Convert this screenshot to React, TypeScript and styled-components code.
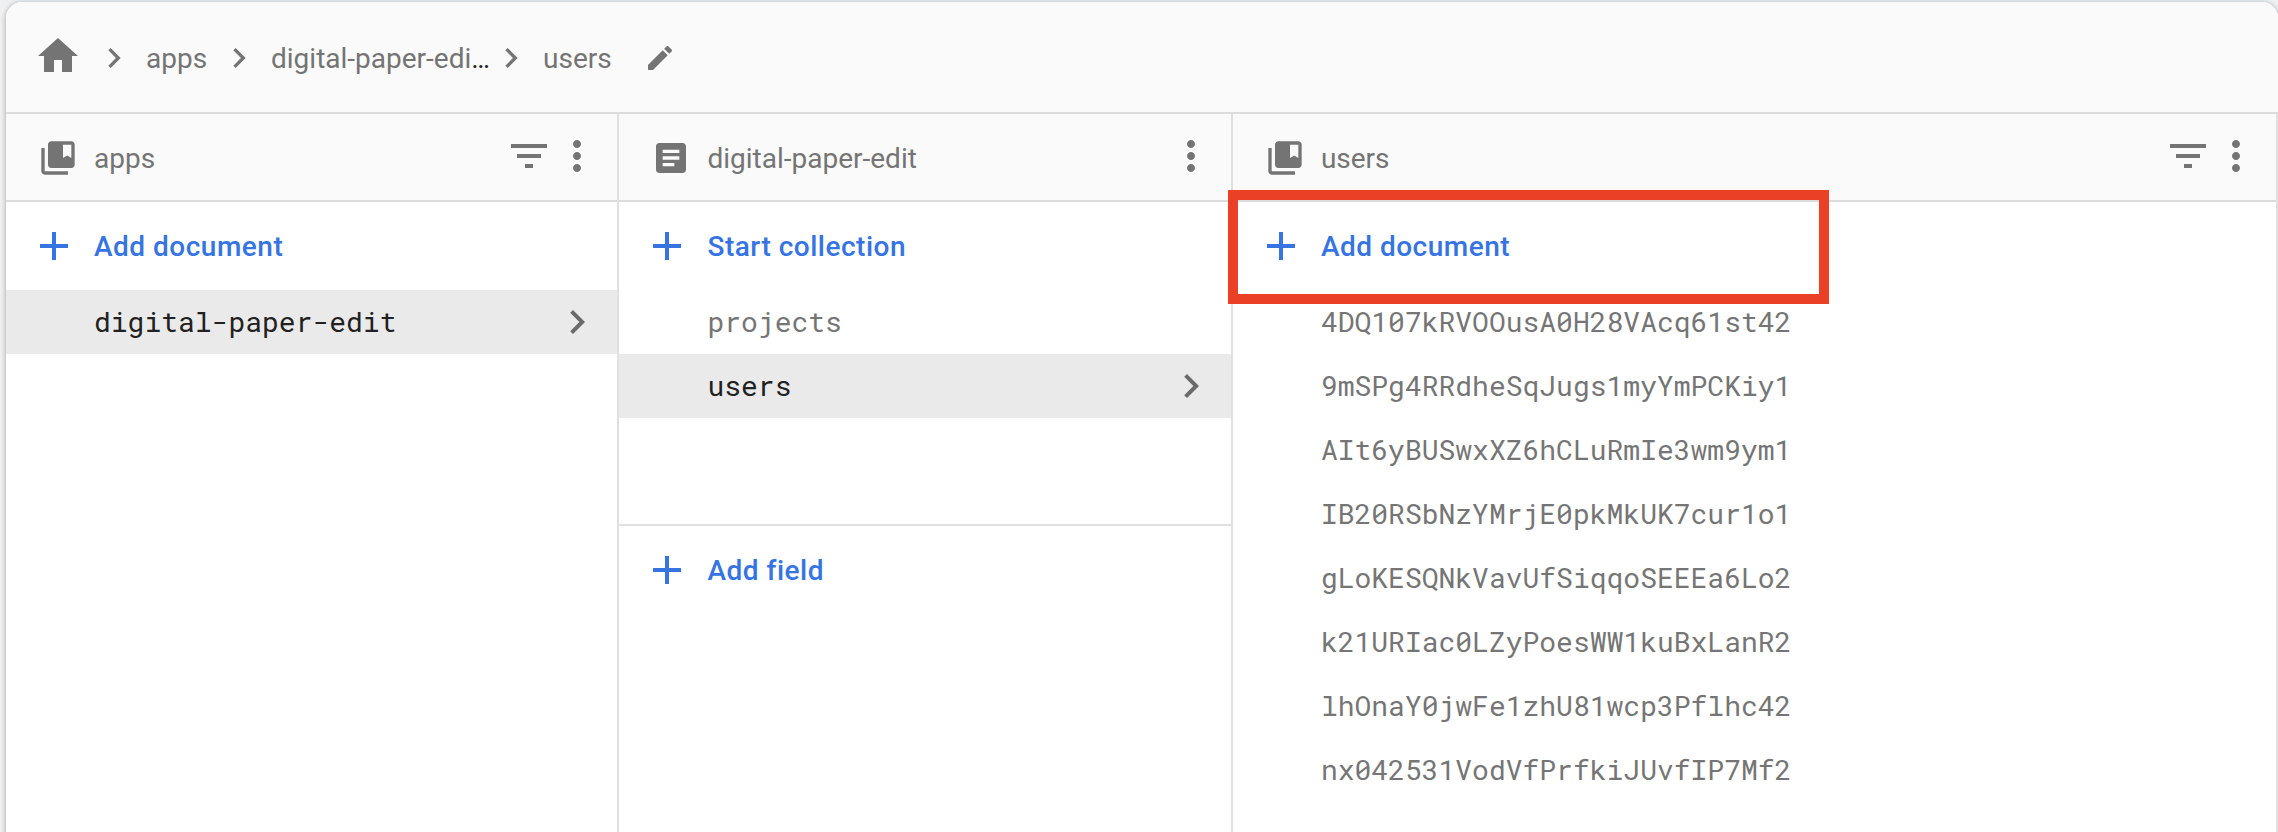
import React from 'react';
import styled, { createGlobalStyle, css } from 'styled-components';

const Global = createGlobalStyle`
  *, *::before, *::after { box-sizing: border-box; }
  html, body { margin: 0; height: 832px; overflow: hidden; }
  body { background: #eef0f2; font-family: Roboto, "Liberation Sans", sans-serif; }
`;

const Page = styled.div`
  height: 832px;
  padding: 2px 0 0 6px;
  overflow: hidden;
`;

const Card = styled.main`
  display: flex;
  flex-direction: column;
  height: 860px;
  background: #fff;
  border-radius: 16px;
  overflow: hidden;
  box-shadow: 0 1px 4px 1px rgba(60, 64, 67, 0.32);
`;

const Breadcrumbs = styled.nav`
  display: flex;
  align-items: center;
  flex: none;
  height: 112px;
  padding-left: 28px;
  background: #fafafa;
  border-bottom: 2px solid #dcdcdc;
  font-size: 28px;
  line-height: 40px;
  color: #747474;
`;

const Crumb = styled.a<{ $width: number }>`
  width: ${(p) => p.$width}px;
  padding-top: 4px;
  white-space: nowrap;
`;

const Ellipsis = styled.span`
  color: #212121;
`;

const Glyph = styled.svg<{ $size: number; $gap?: number; $raise?: number }>`
  display: block;
  flex: none;
  width: ${(p) => p.$size}px;
  height: ${(p) => p.$size}px;
  margin-right: ${(p) => p.$gap ?? 0}px;
  margin-bottom: ${(p) => p.$raise ?? 0}px;
  fill: currentColor;
`;

const Columns = styled.div`
  display: grid;
  grid-template-columns: 27% 27% 46%;
  flex: 1;
`;

const Panel = styled.section`
  min-width: 0;
  border-right: 2px solid #e0e0e0;
`;

const PanelHeader = styled.header`
  display: flex;
  align-items: center;
  height: 88px;
  padding: 0 16px 0 32px;
  background: #fafafa;
  border-bottom: 2px solid #dcdcdc;
  color: #747474;
`;

const PanelTitle = styled.h2`
  flex: 1;
  margin: 0;
  padding-top: 4px;
  font-size: 28px;
  font-weight: 400;
  line-height: 40px;
`;

const AddButton = styled.button`
  position: relative;
  display: flex;
  align-items: center;
  width: 100%;
  height: 88px;
  padding: 0 0 0 24px;
  border: 0;
  background: none;
  color: #3574e2;
  font: 500 28px/40px Roboto, "Liberation Sans", sans-serif;
  letter-spacing: 0.5px;
  text-align: left;
`;

const AddLabel = styled.span`
  padding-top: 2px;
`;

const Highlight = styled.span`
  position: absolute;
  left: -5px;
  top: -12px;
  width: 601px;
  height: 114px;
  border: 10px solid #ea4025;
`;

const Items = styled.ul`
  margin: 0;
  padding: 0;
  list-style: none;
`;

const Item = styled.li<{ $selected?: boolean }>`
  display: flex;
  align-items: center;
  justify-content: space-between;
  height: 64px;
  padding: 0 16px 0 88px;
  font-family: "Roboto Mono", "DejaVu Sans Mono", monospace;
  font-size: 28px;
  line-height: 40px;
  color: #757575;
  ${(p) =>
    p.$selected &&
    css`
      background: #eaeaea;
      color: #212121;
    `}
  svg {
    color: #6b6b6b;
  }
`;

const Fields = styled.div`
  margin-top: 106px;
  border-top: 2px solid #e0e0e0;
`;

const paths = {
  home: 'M10 20v-6h4v6h5v-8h3L12 3 2 12h3v8z',
  chevron: 'M10 6L8.59 7.41 13.17 12l-4.58 4.59L10 18l6-6z',
  edit: 'M3 17.25V21h3.75L17.81 9.94l-3.75-3.75L3 17.25zM20.71 7.04c.39-.39.39-1.02 0-1.41l-2.34-2.34c-.39-.39-1.02-.39-1.41 0l-1.83 1.83 3.75 3.75 1.83-1.83z',
  collection:
    'M4 6H2v14c0 1.1.9 2 2 2h14v-2H4V6zM20 2H8c-1.1 0-2 .9-2 2v12c0 1.1.9 2 2 2h12c1.1 0 2-.9 2-2V4c0-1.1-.9-2-2-2zm0 10l-2.5-1.5L15 12V4h5v8z',
  document:
    'M19 3H5c-1.1 0-2 .9-2 2v14c0 1.1.9 2 2 2h14c1.1 0 2-.9 2-2V5c0-1.1-.9-2-2-2zM14 17H7v-2h7v2zm3-4H7v-2h10v2zm0-4H7V7h10v2z',
  filter: 'M10 18h4v-2h-4v2zM3 6v2h18V6H3zm3 7h12v-2H6v2z',
  more: 'M12 8c1.1 0 2-.9 2-2s-.9-2-2-2-2 .9-2 2 .9 2 2 2zm0 2c-1.1 0-2 .9-2 2s.9 2 2 2 2-.9 2-2-.9-2-2-2zm0 6c-1.1 0-2 .9-2 2s.9 2 2 2 2-.9 2-2-.9-2-2-2z',
  plus: 'M19 13h-6v6h-2v-6H5v-2h6V5h2v6h6v2z',
};

type IconProps = { name: keyof typeof paths; size: number; gap?: number; raise?: number };

const Icon = ({ name, size, gap, raise }: IconProps) => (
  <Glyph viewBox="0 0 24 24" $size={size} $gap={gap} $raise={raise} aria-hidden="true">
    <path d={paths[name]} />
  </Glyph>
);

const Header = ({ title, icon, filter }: { title: string; icon: 'collection' | 'document'; filter?: boolean }) => (
  <PanelHeader>
    <Icon name={icon} size={40} gap={16} raise={-2} />
    <PanelTitle>{title}</PanelTitle>
    {filter && <Icon name="filter" size={48} raise={2} />}
    <Icon name="more" size={48} raise={2} />
  </PanelHeader>
);

const Add = ({ label, highlighted }: { label: string; highlighted?: boolean }) => (
  <AddButton type="button">
    <Icon name="plus" size={48} gap={16} />
    <AddLabel>{label}</AddLabel>
    {highlighted && <Highlight />}
  </AddButton>
);

const List = ({ items, selected }: { items: string[]; selected?: string }) => (
  <Items>
    {items.map((item) => (
      <Item key={item} $selected={item === selected}>
        {item}
        {item === selected && <Icon name="chevron" size={48} />}
      </Item>
    ))}
  </Items>
);

const userIds = [
  '4DQ107kRVOOusA0H28VAcq61st42',
  '9mSPg4RRdheSqJugs1myYmPCKiy1',
  'AIt6yBUSwxXZ6hCLuRmIe3wm9ym1',
  'IB20RSbNzYMrjE0pkMkUK7cur1o1',
  'gLoKESQNkVavUfSiqqoSEEEa6Lo2',
  'k21URIac0LZyPoesWW1kuBxLanR2',
  'lhOnaY0jwFe1zhU81wcp3Pflhc42',
  'nx042531VodVfPrfkiJUvfIP7Mf2',
];

export default function App() {
  return (
    <>
      <Global />
      <Page>
        <Card>
          <Breadcrumbs>
            <Icon name="home" size={48} gap={12} raise={2} />
            <Icon name="chevron" size={40} gap={12} raise={-2} />
            <Crumb $width={73}>apps</Crumb>
            <Icon name="chevron" size={40} gap={12} raise={-2} />
            <Crumb $width={220}>
              digital-paper-edi<Ellipsis>…</Ellipsis>
            </Crumb>
            <Icon name="chevron" size={40} gap={12} raise={-2} />
            <Crumb $width={101}>users</Crumb>
            <Icon name="edit" size={32} raise={-2} />
          </Breadcrumbs>
          <Columns>
            <Panel>
              <Header title="apps" icon="collection" filter />
              <Add label="Add document" />
              <List items={['digital-paper-edit']} selected="digital-paper-edit" />
            </Panel>
            <Panel>
              <Header title="digital-paper-edit" icon="document" />
              <Add label="Start collection" />
              <List items={['projects', 'users']} selected="users" />
              <Fields>
                <Add label="Add field" />
              </Fields>
            </Panel>
            <Panel>
              <Header title="users" icon="collection" filter />
              <Add label="Add document" highlighted />
              <List items={userIds} />
            </Panel>
          </Columns>
        </Card>
      </Page>
    </>
  );
}
